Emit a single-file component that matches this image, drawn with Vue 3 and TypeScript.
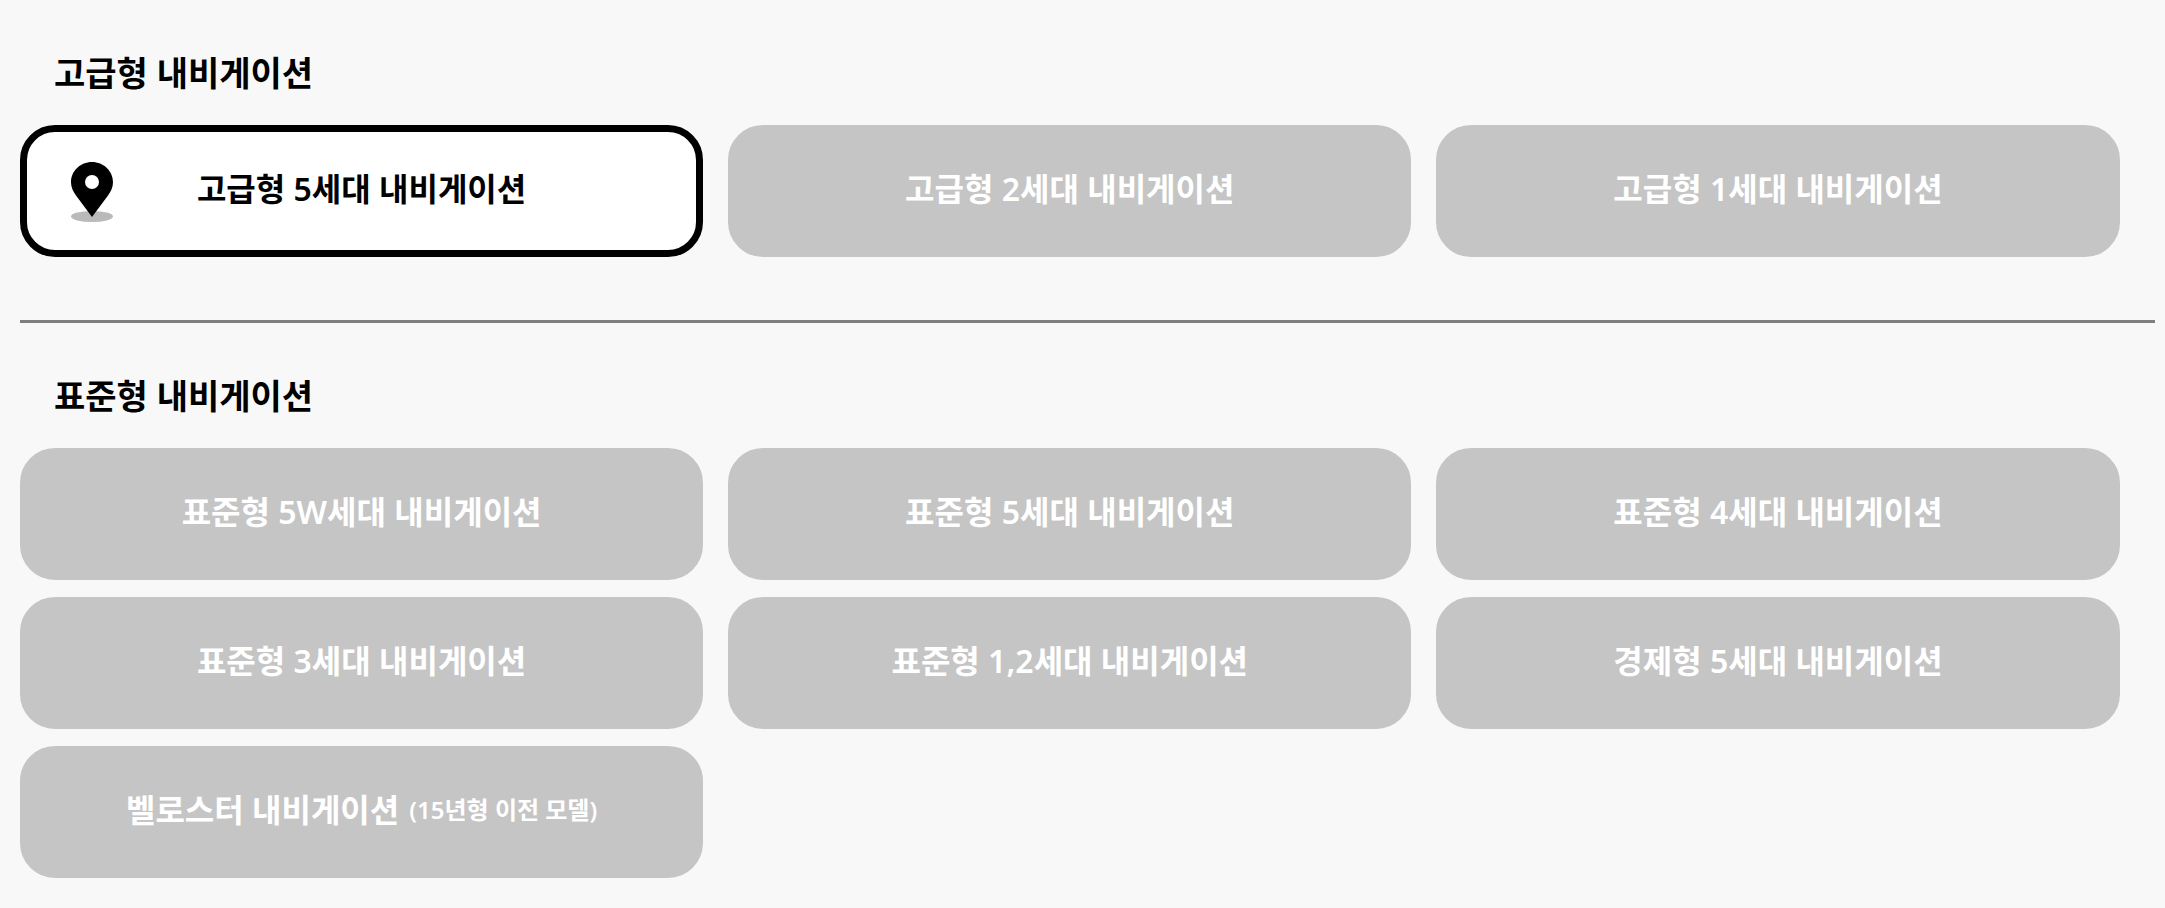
<script setup lang="ts">
import { ref } from 'vue'

interface NaviModel {
  id: string
  label: string
  note?: string
}

interface NaviGroup {
  id: string
  title: string
  models: NaviModel[]
}

const groups: NaviGroup[] = [
  {
    id: 'premium',
    title: '고급형 내비게이션',
    models: [
      { id: 'premium-5', label: '고급형 5세대 내비게이션' },
      { id: 'premium-2', label: '고급형 2세대 내비게이션' },
      { id: 'premium-1', label: '고급형 1세대 내비게이션' },
    ],
  },
  {
    id: 'standard',
    title: '표준형 내비게이션',
    models: [
      { id: 'standard-5w', label: '표준형 5W세대 내비게이션' },
      { id: 'standard-5', label: '표준형 5세대 내비게이션' },
      { id: 'standard-4', label: '표준형 4세대 내비게이션' },
      { id: 'standard-3', label: '표준형 3세대 내비게이션' },
      { id: 'standard-12', label: '표준형 1,2세대 내비게이션' },
      { id: 'economy-5', label: '경제형 5세대 내비게이션' },
      { id: 'veloster', label: '벨로스터 내비게이션', note: '(15년형 이전 모델)' },
    ],
  },
]

const selected = ref('premium-5')
</script>

<template>
  <main class="page">
    <section v-for="group in groups" :key="group.id" class="group" :aria-labelledby="group.id">
      <h2 :id="group.id" class="title">{{ group.title }}</h2>
      <div class="models">
        <button
          v-for="model in group.models"
          :key="model.id"
          type="button"
          class="model"
          :class="{ active: model.id === selected }"
          :aria-pressed="model.id === selected"
          @click="selected = model.id"
        >
          <svg v-if="model.id === selected" class="pin" viewBox="0 0 42 60" aria-hidden="true">
            <ellipse cx="21" cy="54.5" rx="21" ry="5.5" fill="#bababa" />
            <path
              fill="#000"
              fill-rule="evenodd"
              d="M21 0C9.4 0 0 9 0 20.200C0 25.500 2.300 29.500 5 33.500L21 55L37 33.500C39.700 29.500 42 25.500 42 20.200C42 9 32.600 0 21 0ZM21 13A7 7 0 1 1 21 27A7 7 0 1 1 21 13Z"
            />
          </svg>
          <span>{{ model.label }}</span>
          <span v-if="model.note" class="note">{{ model.note }}</span>
        </button>
      </div>
    </section>
  </main>
</template>

<style>
body {
  background: #f8f8f8;
}
</style>

<style scoped>
.page {
  padding: 0 10px 0 20px;
  font-family: 'Noto Sans', 'Noto Sans CJK KR', sans-serif;
  font-weight: 600;
  color: #000;
}

.group {
  padding: 48px 0 63px;
}

.group + .group {
  border-top: 3px solid #7f7f7f;
}

.group:last-child {
  padding-bottom: 30px;
}

.title {
  margin: 0 0 27px;
  padding-left: 34px;
  font-size: 34px;
  font-weight: 600;
  line-height: 50px;
}

.models {
  display: grid;
  grid-template-columns: repeat(3, 32%);
  gap: 17px 25px;
}

.model {
  position: relative;
  display: flex;
  align-items: center;
  justify-content: center;
  gap: 10px;
  box-sizing: border-box;
  min-height: 132px;
  padding: 32px 20px 36px;
  border: 7px solid #c5c5c5;
  border-radius: 35px;
  background: #c5c5c5;
  color: #fff;
  font: inherit;
  font-size: 32px;
  line-height: 50px;
  cursor: pointer;
}

.model.active {
  border-color: #000;
  background: #fff;
  color: #000;
}

.note {
  font-size: 24px;
}

.pin {
  position: absolute;
  top: 30px;
  left: 44px;
  width: 42px;
  height: 60px;
}
</style>
